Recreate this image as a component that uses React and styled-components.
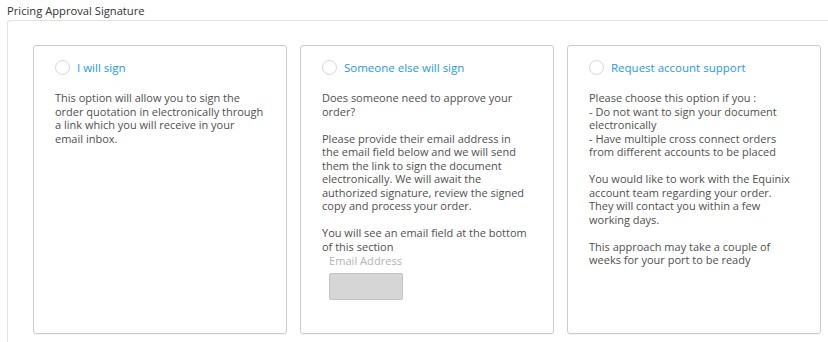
import React from 'react';
import styled, { createGlobalStyle } from 'styled-components';

const GlobalStyle = createGlobalStyle`
  html, body {
    margin: 0;
    padding: 0;
    background: #ffffff;
    overflow: hidden;
  }
  body {
    font-family: "Open Sans", "Liberation Sans", sans-serif;
  }
`;

const Page = styled.div`
  padding: 4px 0 0 7px;
  width: 828px;
  height: 342px;
  box-sizing: border-box;
  overflow: hidden;
`;

const SectionTitle = styled.div`
  font-size: 11.2px;
  color: #333;
  line-height: 14px;
  margin-bottom: 2px;
`;

const Outer = styled.div`
  border: 1px solid #e2e3e5;
  border-right: none;
  border-bottom: none;
  border-radius: 3px 0 0 0;
  padding: 24px 0 0 25px;
  height: 322px;
  box-sizing: border-box;
`;

const Options = styled.div`
  display: grid;
  grid-template-columns: repeat(3, 254px);
  column-gap: 13px;
`;

const Card = styled.div`
  border: 1px solid #c9cdd3;
  border-radius: 3px;
  height: 289px;
  box-sizing: border-box;
  padding: 13px 20px 0 21px;
  box-shadow: 0 1px 1px rgba(0, 0, 0, 0.05);
`;

const OptionHead = styled.label`
  display: flex;
  align-items: center;
  gap: 7px;
  height: 16px;
  margin-bottom: 16px;
  cursor: pointer;
`;

const Radio = styled.span`
  width: 13px;
  height: 13px;
  border-radius: 50%;
  border: 1px solid #d3d6da;
  background: #fff;
  flex-shrink: 0;
`;

const OptionLabel = styled.span`
  color: #1a9bef;
  font-size: 11.5px;
`;

const Body = styled.div`
  color: #505050;
  font-size: 11px;
  line-height: 13.5px;
  white-space: nowrap;
`;

const Para = styled.p`
  margin: 0 0 13.5px;
  &:last-child {
    margin-bottom: 0;
  }
`;

const FieldLabel = styled.div`
  color: #b3b3b3;
  font-size: 11.1px;
  line-height: 14px;
  margin: 1px 0 5px 7px;
`;

const EmailBox = styled.div`
  width: 74px;
  height: 27px;
  margin-left: 7px;
  box-sizing: border-box;
  background: #d6d6d6;
  border: 1px solid #c3c3c3;
  border-radius: 2px;
`;

const options = [
  {
    label: 'I will sign',
    paras: [
      'This option will allow you to sign the\norder quotation in electronically through\na link which you will receive in your\nemail inbox.',
    ],
  },
  {
    label: 'Someone else will sign',
    paras: [
      'Does someone need to approve your\norder?',
      'Please provide their email address in\nthe email field below and we will send\nthem the link to sign the document\nelectronically. We will await the\nauthorized signature, review the signed\ncopy and process your order.',
      'You will see an email field at the bottom\nof this section',
    ],
    email: true,
  },
  {
    label: 'Request account support',
    paras: [
      'Please choose this option if you :\n- Do not want to sign your document\nelectronically\n- Have multiple cross connect orders\nfrom different accounts to be placed',
      'You would like to work with the Equinix\naccount team regarding your order.\nThey will contact you within a few\nworking days.',
      'This approach may take a couple of\nweeks for your port to be ready',
    ],
  },
];

const App = () => {
  return (
    <>
      <GlobalStyle />
      <Page>
        <SectionTitle>Pricing Approval Signature</SectionTitle>
        <Outer>
          <Options>
            {options.map((opt) => (
              <Card key={opt.label}>
                <OptionHead>
                  <Radio />
                  <OptionLabel>{opt.label}</OptionLabel>
                </OptionHead>
                <Body>
                  {opt.paras.map((p, i) => (
                    <Para key={i}>
                      {p.split('\n').map((line, j) => (
                        <React.Fragment key={j}>
                          {j > 0 && <br />}
                          {line}
                        </React.Fragment>
                      ))}
                    </Para>
                  ))}
                </Body>
                {opt.email && (
                  <>
                    <FieldLabel>Email Address</FieldLabel>
                    <EmailBox />
                  </>
                )}
              </Card>
            ))}
          </Options>
        </Outer>
      </Page>
    </>
  );
};

export default App;
